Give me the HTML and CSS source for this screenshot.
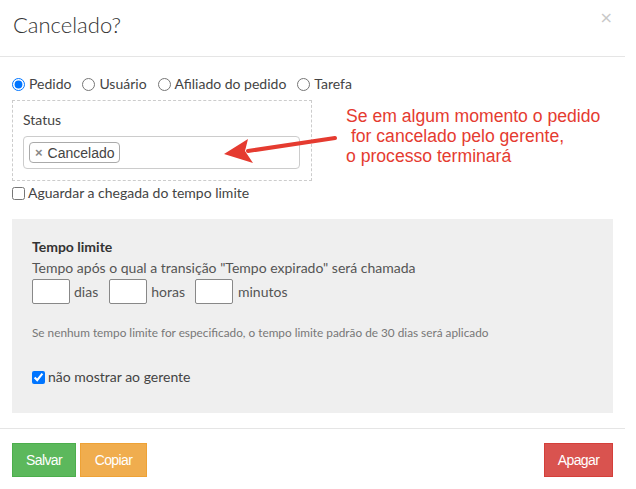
FILE: index.html
```html
<!DOCTYPE html>
<html lang="pt">
<head>
<meta charset="utf-8">
<title>Cancelado?</title>
<link rel="stylesheet" href="styles.css">
</head>
<body>
<div class="modal">
  <div class="modal-header">
    <h4 class="modal-title">Cancelado?</h4>
    <span class="close">&times;</span>
  </div>
  <div class="modal-body">
    <div class="radios">
      <label class="radio"><input type="radio" name="t" checked> Pedido</label>
      <label class="radio"><input type="radio" name="t"> Usuário</label>
      <label class="radio"><input type="radio" name="t"> Afiliado do pedido</label>
      <label class="radio"><input type="radio" name="t"> Tarefa</label>
    </div>
    <div class="status-box">
      <div class="status-label">Status</div>
      <div class="select">
        <span class="tag"><span class="tag-x">&times;</span>Cancelado</span>
      </div>
    </div>
    <label class="check"><input type="checkbox"> Aguardar a chegada do tempo limite</label>
    <div class="timeout">
      <div class="timeout-title">Tempo limite</div>
      <div class="timeout-desc">Tempo após o qual a transição "Tempo expirado" será chamada</div>
      <div class="timeout-inputs">
        <input type="text" class="num"><span class="unit">dias</span>
        <input type="text" class="num"><span class="unit">horas</span>
        <input type="text" class="num"><span class="unit">minutos</span>
      </div>
      <div class="note">Se nenhum tempo limite for especificado, o tempo limite padrão de 30 dias será aplicado</div>
      <label class="check check-inner"><input type="checkbox" checked> não mostrar ao gerente</label>
    </div>
  </div>
  <div class="modal-footer">
    <button class="btn btn-green">Salvar</button>
    <button class="btn btn-orange">Copiar</button>
    <span class="spacer"></span>
    <button class="btn btn-red">Apagar</button>
  </div>

  <div class="annotation">Se em algum momento o pedido<br>&nbsp;for cancelado pelo gerente,<br>o processo terminará</div>
  <svg class="arrow" width="130" height="40" viewBox="0 0 130 40">
    <line x1="115" y1="7" x2="28" y2="20" stroke="#e53b30" stroke-width="4" stroke-linecap="round"/>
    <polygon points="4,23 28,8 25,20 33,32" fill="#e53b30"/>
  </svg>
</div>
</body>
</html>
```
FILE: styles.css
```css
* { box-sizing: border-box; }
html, body { margin: 0; padding: 0; background: #fff; }
body {
  font-family: Lato, "Open Sans", sans-serif;
  font-size: 14px;
  color: #333;
}
.modal {
  position: relative;
  width: 625px;
}
.modal-header {
  height: 57px;
  border-bottom: 1px solid #e5e5e5;
  display: flex;
  justify-content: space-between;
  align-items: flex-start;
  padding: 11px 13px 0 13px;
}
.modal-title {
  margin: 0;
  font-size: 22px;
  font-weight: 300;
  line-height: 28px;
  color: #333;
}
.close {
  color: #c8c8c8;
  font-size: 16px;
  line-height: 14px;
  margin-right: -1px;
  font-family: "DejaVu Sans", sans-serif;
}
.modal-body {
  padding: 17px 12px 15px 12px;
}
.radios {
  display: flex;
  gap: 11px;
  height: 20px;
  align-items: center;
}
.radio, .check {
  display: flex;
  align-items: center;
  line-height: 20px;
  color: #444;
}
.radio input {
  margin: 0 4px 0 0;
  width: 13px;
  height: 13px;
}
.check input {
  margin: 0 3px 0 0;
  width: 13px;
  height: 13px;
}
.status-box {
  margin-top: 6px;
  border: 1px dashed #ccc;
  width: 300px;
  padding: 9px 11px 11px 10px;
}
.status-label {
  line-height: 20px;
  color: #444;
  margin-bottom: 6px;
}
.select {
  height: 33px;
  border: 1px solid #ccc;
  border-radius: 4px;
  padding: 6px 5px;
  display: flex;
  align-items: center;
}
.tag {
  display: inline-flex;
  align-items: center;
  height: 21px;
  border: 1px solid #aaa;
  border-radius: 4px;
  background: #fff;
  padding: 0 4px 0 5px;
  font-family: "Liberation Sans", Arial, sans-serif;
  color: #444;
}
.tag-x {
  color: #888;
  font-weight: bold;
  margin-right: 5px;
  font-size: 13px;
}
.check { margin-top: 2px; }
.timeout {
  margin-top: 16px;
  background: #efefef;
  padding: 18px 20px 26px 20px;
}
.timeout-title {
  font-weight: bold;
  line-height: 20px;
  color: #333;
}
.timeout-desc {
  line-height: 20px;
  color: #555;
  margin-top: 1px;
}
.timeout-inputs {
  display: flex;
  align-items: center;
  margin-top: 1px;
}
.num {
  width: 38px;
  height: 25px;
  border: 1px solid #888;
  border-radius: 2px;
  background: #fff;
  margin: 0;
  padding: 0;
}
.unit {
  margin-left: 4px;
  margin-right: 4px;
  color: #555;
}
.unit:nth-of-type(1) { margin-right: 11px; }
.unit:nth-of-type(2) { margin-right: 10px; }
.unit:nth-of-type(3) { margin-left: 5px; }
.note {
  margin-top: 21px;
  font-size: 11.8px;
  color: #777;
  line-height: 16px;
}
.check-inner { margin-top: 26px; }
.modal-footer {
  border-top: 1px solid #e5e5e5;
  padding: 14px 12px 12px 12px;
  display: flex;
  gap: 4px;
}
.spacer { flex: 1; }
.btn {
  height: 34px;
  padding: 0;
  font-family: "Liberation Sans", Arial, sans-serif;
  font-size: 14px;
  letter-spacing: -0.6px;
  color: #fff;
  border: 1px solid transparent;
  border-radius: 0;
}
.btn-green { background: #5cb85c; border-color: #4cae4c; width: 64px; }
.btn-orange { background: #f0ad4e; border-color: #eea236; width: 67px; }
.btn-red { background: #d9534f; border-color: #d43f3a; width: 69px; }
.annotation {
  position: absolute;
  left: 346px;
  top: 106px;
  font-family: "Liberation Sans", Arial, sans-serif;
  font-size: 17.6px;
  line-height: 20px;
  color: #e53b30;
  white-space: nowrap;
}
.arrow {
  position: absolute;
  left: 220px;
  top: 131px;
}
```
